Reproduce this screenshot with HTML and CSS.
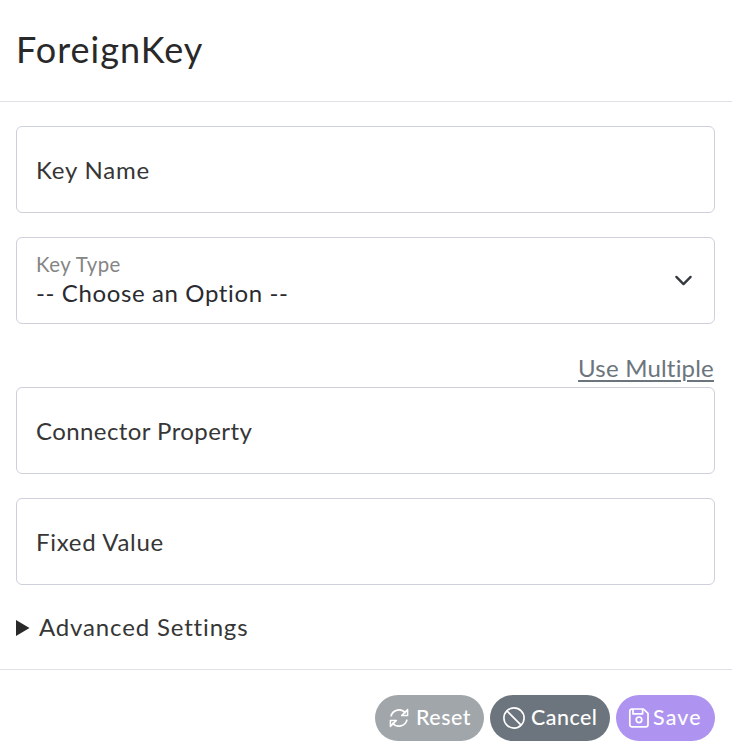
FILE: index.html
```html
<!DOCTYPE html>
<html lang="en">
<head>
<meta charset="utf-8">
<title>ForeignKey</title>
<link rel="stylesheet" href="styles.css">
</head>
<body>
<div class="dialog">
  <header class="header"><h1 class="title">ForeignKey</h1></header>
  <main class="body">
    <div class="field"><span class="label name">Key Name</span></div>
    <div class="field select">
      <div class="select-text">
        <span class="caption">Key Type</span>
        <span class="value">-- Choose an Option --</span>
      </div>
      <svg class="chevron" viewBox="0 0 16 16"><path d="m2 5 6 6 6-6" fill="none" stroke="#343a40" stroke-width="2" stroke-linecap="round" stroke-linejoin="round"/></svg>
    </div>
    <div class="link-row"><a class="link" href="#">Use Multiple</a></div>
    <div class="field"><span class="label connector">Connector Property</span></div>
    <div class="field"><span class="label fixed">Fixed Value</span></div>
    <div class="advanced">
      <svg class="triangle" viewBox="0 0 14 16"><path d="M0 0 13.5 8 0 16z" fill="#292929"/></svg>
      <span class="advanced-text">Advanced Settings</span>
    </div>
  </main>
  <footer class="footer">
    <button class="btn reset">
      <svg class="icon" viewBox="0 0 22 22" fill="none" stroke="#fff" stroke-width="1.7"><path d="M3 9.4A8.2 8.2 0 0 1 17.6 6.3M19 12.6A8.2 8.2 0 0 1 4.4 15.7"/><path d="M19.6 2.6V8.6H13.6zM2.4 19.4V13.4H8.4z" stroke-width="1.5" stroke-linejoin="round"/></svg>
      <span class="reset-text">Reset</span>
    </button>
    <button class="btn cancel">
      <svg class="icon" viewBox="0 0 22 22" fill="none" stroke="#fff" stroke-width="1.6"><circle cx="11" cy="11" r="10.1"/><path d="m3.9 3.9 14.2 14.2"/></svg>
      <span class="cancel-text">Cancel</span>
    </button>
    <button class="btn save">
      <svg class="icon" viewBox="0 0 22 22" fill="none" stroke="#fff" stroke-width="1.7" stroke-linejoin="round"><path d="M4.2 2H15.4L20 6.4V17.4Q20 19.8 17.6 19.8H4.2Q1.8 19.8 1.8 17.4V4.4Q1.8 2 4.2 2z"/><path d="M5 2V6.9H14.6V2"/><circle cx="11" cy="12.8" r="2.8"/></svg>
      <span class="save-text">Save</span>
    </button>
  </footer>
</div>
</body>
</html>
```
FILE: styles.css
```css
* { box-sizing: border-box; }
body { margin: 0; background: #fff; color: #292929; font-family: Lato, "Open Sans", sans-serif; font-size: 24px; line-height: 36px; }
.dialog { height: 756px; display: flex; flex-direction: column; }
.header { height: 102px; padding: 26px 16px; border-bottom: 1px solid #dee2e6; }
.title { margin: 0; font-size: 36px; line-height: 46px; font-weight: 400; letter-spacing: 1px; }
.body { height: 567px; padding: 24px 17px 0 16px; }
.field { height: 87px; margin-bottom: 24px; padding: 0 19px; border: 1px solid #ced1db; border-radius: 6px; display: flex; align-items: center; }
.label, .advanced-text { color: #363636; white-space: nowrap; }
.name { letter-spacing: 0.8px; }
.connector { letter-spacing: 0.42px; }
.fixed { letter-spacing: 0.7px; }
.select { justify-content: space-between; margin-bottom: 26px; }
.select-text { display: flex; flex-direction: column; padding-bottom: 4px; }
.caption { color: #858585; font-size: 20.4px; line-height: 28px; letter-spacing: 0.5px; }
.value { color: #292b30; line-height: 30px; letter-spacing: 0.62px; }
.chevron { width: 19px; height: 19px; margin-right: 2px; }
.link-row { display: flex; justify-content: flex-end; height: 37px; }
.link { color: #6c757d; letter-spacing: 0.2px; text-decoration: underline; text-decoration-thickness: 2px; text-underline-offset: 3px; margin-right: 1px; }
.advanced { display: flex; align-items: center; height: 38px; }
.triangle { width: 14px; height: 16px; margin-right: 9px; }
.advanced-text { letter-spacing: 0.84px; padding-bottom: 2px; }
.footer { flex: 1; display: flex; justify-content: flex-end; gap: 6px; padding: 25px 17px 0 0; border-top: 1px solid #dee2e6; }
.btn { height: 46px; border: 0; border-radius: 23px; padding: 0 0 1px 13px; display: flex; align-items: center; color: #fff; font: 500 21.4px/30px Lato, sans-serif; white-space: nowrap; }
.btn span { padding-bottom: 1px; }
.icon { width: 22px; height: 22px; flex: none; margin-right: 6px; }
.reset { width: 109px; background: #a1a6ab; letter-spacing: 0.55px; }
.cancel { width: 120px; background: #6c757d; letter-spacing: 0.5px; }
.save { width: 99px; background: #ae93f0; padding-left: 12px; letter-spacing: 1.2px; }
.save .icon { margin-right: 3px; }
```
